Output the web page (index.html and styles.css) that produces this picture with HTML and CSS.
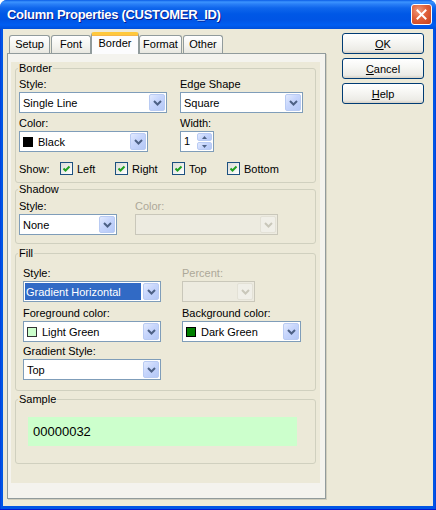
FILE: index.html
```html
<!DOCTYPE html>
<html lang="en">
  <head>
    <meta charset="UTF-8" />
    <title>Column Properties</title>
    <link rel="stylesheet" href="styles.css">
  </head>
  <body>
    <div class="window">
      <div class="titlebar">
        <span class="title">Column Properties (CUSTOMER_ID)</span>
        <span class="close">
          <svg width="11" height="11" viewBox="0 0 11 11"><path d="M1.5 1.5l8 8M9.5 1.5l-8 8" /></svg>
        </span>
      </div>

      <div class="client">
        <div class="sheet">
          <div class="tabs">
            <div class="tab tab-setup">Setup</div>
            <div class="tab tab-font">Font</div>
            <div class="tab tab-border active">Border</div>
            <div class="tab tab-format">Format</div>
            <div class="tab tab-other">Other</div>
          </div>

          <div class="panel">
            <div class="page">
              <!-- border -->
              <fieldset class="group group-border">
                <legend>Border</legend>
                <div class="group-body">
                  <div class="row">
                    <div class="field">
                      <label>Style:</label>
                      <div class="combo combo-border-style">
                        <span class="combo-value">Single Line</span>
                        <span class="combo-btn"><svg width="9" height="6" viewBox="0 0 9 6"><path d="M1 1l3.5 3.5L8 1" /></svg></span>
                      </div>
                    </div>
                    <div class="field">
                      <label>Edge Shape</label>
                      <div class="combo combo-edge">
                        <span class="combo-value">Square</span>
                        <span class="combo-btn"><svg width="9" height="6" viewBox="0 0 9 6"><path d="M1 1l3.5 3.5L8 1" /></svg></span>
                      </div>
                    </div>
                  </div>
                  <div class="row row-second">
                    <div class="field">
                      <label>Color:</label>
                      <div class="combo combo-border-color">
                        <span class="combo-value"><i class="swatch swatch-black"></i>Black</span>
                        <span class="combo-btn"><svg width="9" height="6" viewBox="0 0 9 6"><path d="M1 1l3.5 3.5L8 1" /></svg></span>
                      </div>
                    </div>
                    <div class="field">
                      <label>Width:</label>
                      <div class="spin">
                        <span class="spin-value">1</span>
                        <span class="spin-btns">
                          <span><svg width="5" height="3" viewBox="0 0 5 3"><path d="M0 3h5L2.5 0z" /></svg></span>
                          <span><svg width="5" height="3" viewBox="0 0 5 3"><path d="M0 0h5L2.5 3z" /></svg></span>
                        </span>
                      </div>
                    </div>
                  </div>
                  <div class="show-row">
                    <span>Show:</span>
                    <label class="check"><span class="box"><svg width="11" height="11" viewBox="0 0 11 11"><path d="M2.5 5.5l2 2 4-4" /></svg></span>Left</label>
                    <label class="check"><span class="box"><svg width="11" height="11" viewBox="0 0 11 11"><path d="M2.5 5.5l2 2 4-4" /></svg></span>Right</label>
                    <label class="check"><span class="box"><svg width="11" height="11" viewBox="0 0 11 11"><path d="M2.5 5.5l2 2 4-4" /></svg></span>Top</label>
                    <label class="check"><span class="box"><svg width="11" height="11" viewBox="0 0 11 11"><path d="M2.5 5.5l2 2 4-4" /></svg></span>Bottom</label>
                  </div>
                </div>
              </fieldset>

              <!-- shadow -->
              <fieldset class="group group-shadow">
                <legend>Shadow</legend>
                <div class="group-body">
                  <div class="row">
                    <div class="field">
                      <label>Style:</label>
                      <div class="combo combo-shadow-style">
                        <span class="combo-value">None</span>
                        <span class="combo-btn"><svg width="9" height="6" viewBox="0 0 9 6"><path d="M1 1l3.5 3.5L8 1" /></svg></span>
                      </div>
                    </div>
                    <div class="field">
                      <label class="disabled">Color:</label>
                      <div class="combo combo-shadow-color disabled">
                        <span class="combo-value"></span>
                        <span class="combo-btn"><svg width="9" height="6" viewBox="0 0 9 6"><path d="M1 1l3.5 3.5L8 1" /></svg></span>
                      </div>
                    </div>
                  </div>
                </div>
              </fieldset>

              <!-- fill -->
              <fieldset class="group group-fill">
                <legend>Fill</legend>
                <div class="group-body">
                  <div class="row">
                    <div class="field">
                      <label>Style:</label>
                      <div class="combo combo-fill-style">
                        <span class="combo-value selected">Gradient Horizontal</span>
                        <span class="combo-btn"><svg width="9" height="6" viewBox="0 0 9 6"><path d="M1 1l3.5 3.5L8 1" /></svg></span>
                      </div>
                    </div>
                    <div class="field">
                      <label class="disabled">Percent:</label>
                      <div class="combo combo-percent disabled">
                        <span class="combo-value"></span>
                        <span class="combo-btn"><svg width="9" height="6" viewBox="0 0 9 6"><path d="M1 1l3.5 3.5L8 1" /></svg></span>
                      </div>
                    </div>
                  </div>
                  <div class="row row-fg">
                    <div class="field">
                      <label>Foreground color:</label>
                      <div class="combo combo-fg">
                        <span class="combo-value"><i class="swatch swatch-light-green"></i>Light Green</span>
                        <span class="combo-btn"><svg width="9" height="6" viewBox="0 0 9 6"><path d="M1 1l3.5 3.5L8 1" /></svg></span>
                      </div>
                    </div>
                    <div class="field">
                      <label>Background color:</label>
                      <div class="combo combo-bg">
                        <span class="combo-value"><i class="swatch swatch-dark-green"></i>Dark Green</span>
                        <span class="combo-btn"><svg width="9" height="6" viewBox="0 0 9 6"><path d="M1 1l3.5 3.5L8 1" /></svg></span>
                      </div>
                    </div>
                  </div>
                  <div class="row row-gradient">
                    <div class="field">
                      <label>Gradient Style:</label>
                      <div class="combo combo-gradient">
                        <span class="combo-value">Top</span>
                        <span class="combo-btn"><svg width="9" height="6" viewBox="0 0 9 6"><path d="M1 1l3.5 3.5L8 1" /></svg></span>
                      </div>
                    </div>
                  </div>
                </div>
              </fieldset>

              <!-- sample -->
              <fieldset class="group group-sample">
                <legend>Sample</legend>
                <div class="group-body">
                  <div class="sample">00000032</div>
                </div>
              </fieldset>
            </div>
          </div>
        </div>

        <div class="actions">
          <button class="btn"><u>O</u>K</button>
          <button class="btn"><u>C</u>ancel</button>
          <button class="btn"><u>H</u>elp</button>
        </div>
      </div>
    </div>
  </body>
</html>
```

FILE: styles.css
```css
* {
  box-sizing: border-box;
  margin: 0;
  padding: 0;
}
body {
  width: 436px;
  height: 510px;
  overflow: hidden;
  background: #fff;
  font-family: "Liberation Sans", Arial, sans-serif;
  font-size: 11px;
  color: #000;
}
.window {
  width: 436px;
  height: 510px;
  display: flex;
  flex-direction: column;
  background: linear-gradient(to right, #0831d9 0, #0055e5 1px, #0055e5 435px, #0831d9 436px);
  border-bottom: 1px solid #0019cf;
  border-radius: 7px 7px 0 0;
}

/* title bar */
.titlebar {
  height: 29px;
  display: flex;
  align-items: center;
  justify-content: space-between;
  padding: 0 4px 0 7px;
  border-radius: 7px 7px 0 0;
  background: linear-gradient(
    #0a5ce6 0,
    #3c94fe 2px,
    #2a80f7 4px,
    #0f66ec 8px,
    #0058e6 14px,
    #0055e5 20px,
    #005ef2 25px,
    #0050da 29px
  );
}
.title {
  color: #fff;
  font-weight: bold;
  font-size: 13px;
  letter-spacing: -0.3px;
  text-shadow: 1px 1px 0 #0a1b8c;
}
.close {
  width: 21px;
  height: 21px;
  display: flex;
  align-items: center;
  justify-content: center;
  border: 1px solid #fff;
  border-radius: 3px;
  background: radial-gradient(circle at 35% 30%, #f09a7c 0, #e0603a 45%, #c5401b 100%);
}
.close svg path {
  stroke: #fff;
  stroke-width: 2;
  stroke-linecap: square;
}

/* client area */
.client {
  flex: 1;
  margin: 0 3px 3px;
  padding: 3px 0 0 4px;
  background: #ece9d8;
  display: flex;
}
.sheet {
  width: 319px;
  display: flex;
  flex-direction: column;
}

/* tabs */
.tabs {
  height: 21px;
  display: flex;
  align-items: flex-end;
  padding-left: 2px;
}
.tab {
  height: 18px;
  border: 1px solid #919b9c;
  border-bottom: 0;
  border-radius: 3px 3px 0 0;
  background: linear-gradient(#fff, #f3f3ef 60%, #e8e7e0);
  text-align: center;
  line-height: 16px;
}
.tab-setup {
  width: 41px;
}
.tab-font {
  width: 40px;
  margin-left: 1px;
}
.tab-border {
  width: 48px;
}
.tab-format {
  width: 43px;
}
.tab-other {
  width: 40px;
  margin-left: 1px;
}
.tab.active {
  position: relative;
  z-index: 1;
  height: 22px;
  margin-bottom: -1px;
  border-top: 3px solid #ffc83c;
  box-shadow: inset 0 1px 0 #f5b64a;
  background: #fcfcfe;
  line-height: 17px;
}

.panel {
  height: 446px;
  border: 1px solid #919b9c;
  background: #f4f3ee;
  box-shadow: 1px 1px 0 #d0cdbd;
  padding: 2px 0 0 3px;
}
.page {
  width: 309px;
  height: 421px;
  background: #ece9d8;
  padding-left: 4px;
}

/* group boxes */
.group {
  width: 301px;
  min-width: 0;
  border: 1px solid #d0d0bf;
  border-radius: 3px;
}
.group legend {
  margin-left: 2px;
  padding: 0 1px;
  line-height: 13px;
  height: 13px;
}
.group-border {
  margin-top: 6px;
}
.group-border .group-body {
  padding: 3px 0 7px 3px;
}
.group-border .row {
  grid-template-columns: 161px 1fr;
}
.group-shadow .group-body {
  padding: 4px 0 8px 3px;
}
.group-shadow .row {
  grid-template-columns: 116px 1fr;
}
.group-fill {
  margin-top: 3px;
}
.group-fill .group-body {
  padding: 7px 0 10px 7px;
}
.group-fill .row {
  grid-template-columns: 159px 1fr;
}
.group-sample {
  margin-top: 2px;
}
.group-sample .group-body {
  padding: 11px 0 17px 12px;
}

.row {
  display: grid;
}
.row-second {
  margin-top: 4px;
}
.row-fg {
  margin-top: 5px;
}
.row-gradient {
  margin-top: 3px;
}
.field label {
  display: block;
  height: 13px;
  line-height: 13px;
  margin-bottom: 1px;
}
label.disabled {
  color: #aca899;
}

/* combo boxes */
.combo {
  display: flex;
  height: 21px;
  border: 1px solid #7f9db9;
  background: #fff;
}
.combo-value {
  flex: 1;
  margin: 1px;
  padding-left: 2px;
  display: flex;
  align-items: center;
  gap: 5px;
  white-space: nowrap;
  overflow: hidden;
}
.combo-value.selected {
  background: #316ac5;
  color: #fff;
  padding-left: 1px;
}
.combo-btn {
  width: 16px;
  margin: 1px;
  border: 1px solid #b9cbf3;
  border-radius: 2px;
  background: linear-gradient(135deg, #e2eafe 0, #c6d5fc 45%, #b4c8f6 100%);
  display: flex;
  align-items: center;
  justify-content: center;
}
.combo-btn path {
  fill: none;
  stroke: #4d6185;
  stroke-width: 2;
}
.combo.disabled {
  border-color: #c9c7ba;
  background: #edebe0;
}
.combo.disabled .combo-btn {
  border-color: #e3e1d6;
  background: #f0efe8;
}
.combo.disabled .combo-btn path {
  stroke: #c9c7ba;
}
.combo-border-style {
  width: 148px;
}
.combo-edge {
  width: 123px;
}
.combo-border-color {
  width: 129px;
}
.combo-shadow-style {
  width: 98px;
}
.combo-shadow-color {
  width: 143px;
}
.combo-fill-style,
.combo-fg,
.combo-gradient {
  width: 138px;
}
.combo-percent {
  width: 73px;
}
.combo-bg {
  width: 119px;
}

.swatch {
  width: 10px;
  height: 10px;
  flex: none;
  border: 1px solid #000;
}
.swatch-black {
  background: #000;
}
.swatch-light-green {
  border-color: #333;
  background: #ccffcc;
}
.swatch-dark-green {
  background: #008000;
}

/* spinner */
.spin {
  width: 34px;
  height: 21px;
  display: flex;
  border: 1px solid #7f9db9;
  background: #fff;
}
.spin-value {
  flex: 1;
  padding-left: 3px;
  line-height: 19px;
}
.spin-btns {
  width: 16px;
  display: flex;
  flex-direction: column;
  gap: 1px;
  padding: 1px 1px 1px 0;
}
.spin-btns span {
  flex: 1;
  border: 1px solid #b9cbf3;
  border-radius: 2px;
  background: linear-gradient(135deg, #e2eafe 0, #c6d5fc 45%, #b4c8f6 100%);
  display: flex;
  align-items: center;
  justify-content: center;
}
.spin-btns path {
  fill: #4d6185;
}

/* checkboxes */
.show-row {
  margin-top: 10px;
  height: 13px;
  display: grid;
  grid-template-columns: 41px 55px 57px 55px auto;
  align-items: center;
}
.check {
  display: flex;
  align-items: center;
  gap: 4px;
}
.box {
  width: 13px;
  height: 13px;
  border: 1px solid #1c5180;
  background: linear-gradient(135deg, #dcdcd7, #fff);
}
.box svg {
  display: block;
}
.box path {
  fill: none;
  stroke: #21a121;
  stroke-width: 2;
}

.sample {
  width: 269px;
  height: 29px;
  padding-left: 5px;
  background: #ccffcc;
  font-size: 13px;
  line-height: 29px;
}

/* buttons */
.actions {
  margin: 1px 0 0 16px;
  display: flex;
  flex-direction: column;
  gap: 4px;
}
.btn {
  width: 82px;
  height: 21px;
  border: 1px solid #003c74;
  border-radius: 3px;
  background: linear-gradient(#fff 0, #f7f7f4 40%, #ecebe6 85%, #d6d0c5 100%);
  font-family: "Liberation Sans", Arial, sans-serif;
  font-size: 11px;
  color: #000;
}
```
